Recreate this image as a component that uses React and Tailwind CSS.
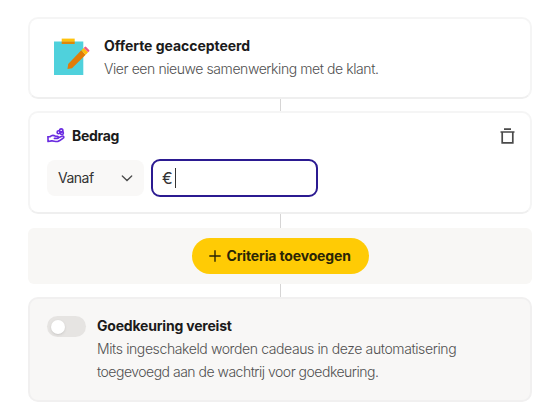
import React from "react";

const Connector = ({ className }) => (
  <div className={`mx-auto w-px bg-[#d6d5d5] ${className}`}></div>
);

const ClipboardIcon = () => (
  <svg className="h-10 w-10 shrink-0" viewBox="0 0 40 40">
    <path fill="#4fd1dc" d="M2 4.600h29.300V38H2z" />
    <path fill="#ffc20c" d="M9.700 1.600h13v3.200h-13z" />
    <path fill="#e08706" d="M9.700 4.600h13V7h-13z" />
    <path fill="#e17c08" d="M29.300 13.300l4.400 4.400L20 31.200l-4.500.8.700-5.100z" />
    <path fill="#ffbd0a" d="M29.300 13.300l2.400-2.400 4.400 4.400-2.400 2.400z" />
    <path fill="#ef5a83" d="M31.700 10.900l1-1q.8-.6 1.500.1l2.900 2.900q.7.700.1 1.400l-1.100 1z" />
  </svg>
);

const HandCoinsIcon = () => (
  <svg
    className="h-4 w-[18px]"
    viewBox="0 0 18 16"
    fill="none"
    stroke="#6a2be0"
    strokeWidth="1.600"
    strokeLinecap="round"
    strokeLinejoin="round"
  >
    <circle cx="14.200" cy="2.600" r="1.700" />
    <circle cx="11.600" cy="4.200" r="1.500" />
    <circle cx="14.900" cy="5" r="1.500" />
    <path d="M1 8.800l2.100-.2C4.800 7 6.600 7 8.400 8.200h2c1.300 0 1.300 2.200 0 2.200H7.400" />
    <path d="M11.300 9.700l3.600-1.500c1.800-.6 2.500 1 1.200 2-1.700 1.300-3.500 2.800-5.200 3.200-2.400.5-4.200-.7-6.200-.5L1 13.500V8.800" />
  </svg>
);

const TrashIcon = () => (
  <svg
    className="h-4 w-4"
    viewBox="0 0 16 16"
    fill="none"
    stroke="#4a4a4a"
    strokeWidth="1.700"
  >
    <path d="M5 1.200h7M1.500 4h14M3.200 4v10.800h10.600V4" />
  </svg>
);

const App = () => {
  return (
    <div className="h-[420px] w-[560px] bg-white pt-[17px] pl-7 font-['Inter',sans-serif] text-sm text-[#1b1b1b]">
      <div className="w-[504px]">
        {/* Trigger */}
        <section className="flex h-[82px] items-start rounded-[10px] border-2 border-[#f5f5f5] border-b-[#efefef] bg-white pt-[18px] pl-[22px]">
          <ClipboardIcon />
          <div className="ml-3 whitespace-nowrap">
            <h2 className="h-[19px] leading-[17px] font-bold tracking-[-0.040px]">
              Offerte geaccepteerd
            </h2>
            <p className="mt-[3px] leading-5 font-[350] tracking-[-0.420px] text-[#505050]">
              Vier een nieuwe samenwerking met de klant.
            </p>
          </div>
        </section>

        <Connector className="h-3" />

        {/* Amount criterion */}
        <section className="h-[103px] rounded-[10px] border-2 border-[#f5f5f5] border-b-[#efefef] bg-white px-[17px] pt-[13px]">
          <div className="flex h-5 items-center">
            <HandCoinsIcon />
            <h2 className="ml-[7px] font-bold tracking-[-0.300px]">Bedrag</h2>
            <button className="mr-[-2px] ml-auto">
              <TrashIcon />
            </button>
          </div>
          <div className="mt-[13px] flex items-center gap-[7px]">
            <button className="flex h-9 w-[97px] items-center justify-between rounded-lg bg-[#f9f8f7] pr-[11px] pl-[11px] text-[#333]">
              <span className="tracking-[-0.500px]">Vanaf</span>
              <svg
                className="h-3 w-3"
                viewBox="0 0 12 12"
                fill="none"
                stroke="#4a4a4a"
                strokeWidth="1.300"
                strokeLinecap="round"
              >
                <path d="M1.300 4L6 8.500 10.700 4" />
              </svg>
            </button>
            <div className="flex h-[38px] w-[167px] items-center rounded-[9px] border-2 border-[#2b1a91] pl-[9px] text-base text-[#333]">
              <span className="w-[11px]">€</span>
              <span className="ml-[2px] h-5 w-px bg-[#333]"></span>
            </div>
          </div>
        </section>

        <Connector className="h-[14px]" />

        {/* Add criteria */}
        <div className="flex h-14 items-center justify-center rounded-md bg-[#f8f7f5]">
          <button className="flex h-9 w-[177px] items-center rounded-full bg-[#ffcb05] pl-[17px] font-bold whitespace-nowrap text-[#2b2505]">
            <svg
              className="mr-[6px] h-3 w-3 shrink-0"
              viewBox="0 0 12 12"
              stroke="#2b2505"
              strokeWidth="1.400"
            >
              <path d="M6 .3v11.400M.3 6h11.400" />
            </svg>
            <span className="tracking-[-0.150px]">Criteria toevoegen</span>
          </button>
        </div>

        <Connector className="h-[13px]" />

        {/* Approval */}
        <section className="flex h-[105px] items-start rounded-[10px] border-2 border-[#f1f0f0] bg-[#f8f7f6] pt-[17px] pl-[17px]">
          <div className="flex h-[21px] w-[39px] shrink-0 items-center rounded-full bg-[#e6e4e2] pl-[4px]">
            <div className="h-[14px] w-[14px] rounded-full bg-white shadow-sm"></div>
          </div>
          <div className="ml-[11px] whitespace-nowrap">
            <h2 className="h-[19px] leading-[19px] font-bold tracking-[-0.200px]">
              Goedkeuring vereist
            </h2>
            <p className="mt-[2px] leading-[23px] font-[350] text-[#505050]">
              <span className="block tracking-[-0.390px]">
                Mits ingeschakeld worden cadeaus in deze automatisering
              </span>
              <span className="block tracking-[-0.500px]">
                toegevoegd aan de wachtrij voor goedkeuring.
              </span>
            </p>
          </div>
        </section>
      </div>
    </div>
  );
};

export default App;
